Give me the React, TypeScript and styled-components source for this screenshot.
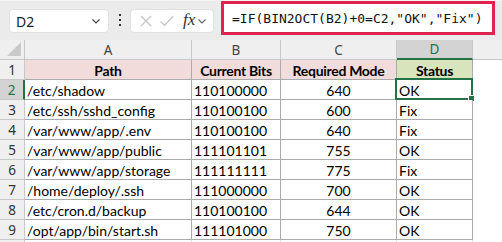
import React from "react";
import styled, { createGlobalStyle } from "styled-components";

const Global = createGlobalStyle`
  html, body { margin: 0; padding: 0; background: #ffffff; }
  body { width: 502px; height: 242px; overflow: hidden; }
`;

const Page = styled.div`
  width: 502px;
  height: 242px;
  display: flex;
  flex-direction: column;
  overflow: hidden;
  font-family: "Lato", "Liberation Sans", sans-serif;
`;

const Toolbar = styled.div`
  height: 40px;
  flex: none;
  background: #ebebeb;
  border-top: 1px solid #f4f4f4;
  box-sizing: border-box;
  display: flex;
  align-items: flex-start;
  padding: 0 0 0 9px;
`;

const NameBox = styled.div`
  margin-top: 8px;
  width: 100px;
  height: 24px;
  box-sizing: border-box;
  background: #ffffff;
  border: 1px solid #e2e2e2;
  border-radius: 4px;
  display: flex;
  align-items: center;
  justify-content: space-between;
  padding: 0 6px 0 6px;
  font-family: "Noto Sans", "Liberation Sans", sans-serif;
  font-size: 14px;
  color: #222;
`;

const Dots = styled.div`
  width: 21px;
  height: 40px;
  display: flex;
  align-items: center;
  justify-content: center;
  margin-top: -1px;
`;

const FxBox = styled.div`
  margin-top: 8px;
  width: 84px;
  height: 24px;
  box-sizing: border-box;
  background: #ffffff;
  border: 1px solid #e2e2e2;
  border-radius: 4px;
  display: flex;
  align-items: center;
  padding: 0 0 0 8px;
  gap: 6px;
`;

const FxText = styled.span`
  font-family: "Liberation Serif", serif;
  font-style: italic;
  font-size: 17px;
  color: #333;
  margin-left: 2px;
  margin-top: -2px;
`;

const FormulaBox = styled.div`
  margin-left: 7px;
  width: 274px;
  height: 34px;
  box-sizing: border-box;
  background: #ffffff;
  border: 3px solid #e0234f;
  display: flex;
  align-items: center;
  padding-left: 8px;
  font-family: "DejaVu Sans Mono", "Liberation Mono", monospace;
  font-size: 13px;
  color: #111;
  white-space: pre;
`;

const Grid = styled.div`
  display: grid;
  grid-template-columns: 25px 167px 89px 116px 76px 29px;
  grid-auto-rows: 20px;
`;

const ColHead = styled.div<{ $sel?: boolean; $blank?: boolean }>`
  box-sizing: border-box;
  background: ${(p) => (p.$sel ? "#d3d3d3" : "#efefef")};
  border-right: ${(p) => (p.$blank ? "none" : "1px solid #c8c8c8")};
  border-bottom: ${(p) => (p.$sel ? "2px solid #217346" : "1px solid #c8c8c8")};
  color: ${(p) => (p.$sel ? "#217346" : "#444")};
  font-family: "Noto Sans", "Liberation Sans", sans-serif;
  font-size: 13.5px;
  display: flex;
  align-items: center;
  justify-content: center;
  position: relative;
  overflow: hidden;
`;

const RowHead = styled.div<{ $sel?: boolean }>`
  box-sizing: border-box;
  background: ${(p) => (p.$sel ? "#d3d3d3" : "#efefef")};
  border-right: ${(p) => (p.$sel ? "2px solid #217346" : "1px solid #c8c8c8")};
  border-bottom: 1px solid #c8c8c8;
  color: ${(p) => (p.$sel ? "#217346" : "#333")};
  font-family: "Noto Sans", "Liberation Sans", sans-serif;
  font-size: 13.5px;
  display: flex;
  align-items: center;
  justify-content: center;
  padding-top: 1px;
`;

const Cell = styled.div<{ $align?: "left" | "center"; $bg?: string; $bold?: boolean; $grid?: boolean }>`
  box-sizing: border-box;
  background: ${(p) => p.$bg || "#ffffff"};
  border-right: 1px solid ${(p) => (p.$grid ? "#e1e1e1" : "#ababab")};
  border-bottom: 1px solid ${(p) => (p.$grid ? "#e1e1e1" : "#ababab")};
  font-size: 14px;
  font-weight: ${(p) => (p.$bold ? 700 : 400)};
  letter-spacing: ${(p) => (p.$bold ? "-0.3px" : "0")};
  color: #000;
  display: flex;
  align-items: center;
  padding-top: 2px;
  justify-content: ${(p) => (p.$align === "center" ? "center" : "flex-start")};
  padding-left: ${(p) => (p.$align === "center" ? "0" : "2px")};
  white-space: nowrap;
  overflow: visible;
  position: relative;
`;

const Blank = styled.div`
  background: #ffffff;
`;

const Selection = styled.div`
  position: absolute;
  left: -2px;
  top: -2px;
  right: -1px;
  bottom: -1px;
  border: 2px solid #217346;
  pointer-events: none;
`;

const Handle = styled.div`
  position: absolute;
  right: -4px;
  bottom: -4px;
  width: 5px;
  height: 5px;
  background: #217346;
  border: 1px solid #ffffff;
`;

const rows = [
  ["/etc/shadow", "110100000", "640", "OK"],
  ["/etc/ssh/sshd_config", "110100100", "600", "Fix"],
  ["/var/www/app/.env", "110100100", "640", "Fix"],
  ["/var/www/app/public", "111101101", "755", "OK"],
  ["/var/www/app/storage", "111111111", "775", "Fix"],
  ["/home/deploy/.ssh", "111000000", "700", "OK"],
  ["/etc/cron.d/backup", "110100100", "644", "OK"],
  ["/opt/app/bin/start.sh", "111101000", "750", "OK"],
];

const Chevron = () => (
  <svg width="12" height="12" viewBox="0 0 12 12">
    <path d="M2.5 4.5 L6 8 L9.5 4.5" fill="none" stroke="#444" strokeWidth="1.2" />
  </svg>
);

export default function App() {
  return (
    <Page>
      <Global />
      <Toolbar>
        <NameBox>
          <span>D2</span>
          <Chevron />
        </NameBox>
        <Dots>
          <svg width="4" height="14" viewBox="0 0 4 14">
            <rect x="1" y="1" width="2" height="2" fill="#333" />
            <rect x="1" y="6" width="2" height="2" fill="#333" />
            <rect x="1" y="11" width="2" height="2" fill="#333" />
          </svg>
        </Dots>
        <FxBox>
          <svg width="14" height="14" viewBox="0 0 14 14">
            <path d="M2 2 L12 12 M12 2 L2 12" stroke="#c4c4c4" strokeWidth="1.2" />
          </svg>
          <svg width="16" height="14" viewBox="0 0 16 14">
            <path d="M1.5 7.5 L5.5 11.5 L14.5 2" fill="none" stroke="#c4c4c4" strokeWidth="1.2" />
          </svg>
          <FxText>fx</FxText>
          <svg width="10" height="12" viewBox="0 0 10 12" style={{ marginLeft: -4 }}>
            <path d="M1.5 4.5 L5 8 L8.5 4.5" fill="none" stroke="#666" strokeWidth="1.1" />
          </svg>
        </FxBox>
        <FormulaBox>{'=IF(BIN2OCT(B2)+0=C2,"OK","Fix")'}</FormulaBox>
      </Toolbar>
      <Grid>
        <ColHead>
          <svg width="14" height="14" viewBox="0 0 14 14" style={{ position: "absolute", right: 3, bottom: 3 }}>
            <path d="M14 0 L14 14 L0 14 Z" fill="#c9c9c9" />
          </svg>
        </ColHead>
        <ColHead>A</ColHead>
        <ColHead>B</ColHead>
        <ColHead>C</ColHead>
        <ColHead $sel>D</ColHead>
        <ColHead $blank />

        <RowHead>1</RowHead>
        <Cell $align="center" $bold $bg="#f2dcdb">Path</Cell>
        <Cell $align="center" $bold $bg="#f2dcdb">Current Bits</Cell>
        <Cell $align="center" $bold $bg="#f2dcdb">Required Mode</Cell>
        <Cell $align="center" $bold $bg="#d8e4bc">Status</Cell>
        <Blank />

        {rows.map((r, i) => (
          <React.Fragment key={i}>
            <RowHead $sel={i === 0}>{i + 2}</RowHead>
            <Cell>{r[0]}</Cell>
            <Cell>{r[1]}</Cell>
            <Cell $align="center">{r[2]}</Cell>
            <Cell>
              {r[3]}
              {i === 0 && (
                <Selection>
                  <Handle />
                </Selection>
              )}
            </Cell>
            <Blank />
          </React.Fragment>
        ))}

        <RowHead />
        <Cell $grid />
        <Cell $grid />
        <Cell $grid />
        <Cell $grid />
        <Blank />
      </Grid>
    </Page>
  );
}
